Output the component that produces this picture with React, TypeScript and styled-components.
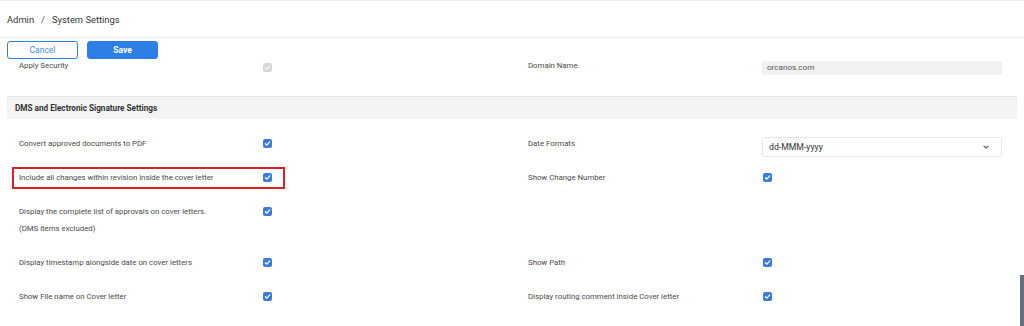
import styled, { createGlobalStyle } from "styled-components";

type Setting = {
  label: string;
  note?: string;
  checked?: boolean;
  highlight?: boolean;
};

type RowData = {
  left: Setting;
  right?: Setting & { select?: string };
};

const rows: RowData[] = [
  {
    left: { label: "Convert approved documents to PDF", checked: true },
    right: { label: "Date Formats", select: "dd-MMM-yyyy" },
  },
  {
    left: {
      label: "Include all changes within revision inside the cover letter",
      checked: true,
      highlight: true,
    },
    right: { label: "Show Change Number", checked: true },
  },
  {
    left: {
      label: "Display the complete list of approvals on cover letters.",
      note: "(DMS items excluded)",
      checked: true,
    },
  },
  {
    left: { label: "Display timestamp alongside date on cover letters", checked: true },
    right: { label: "Show Path", checked: true },
  },
  {
    left: { label: "Show File name on Cover letter", checked: true },
    right: { label: "Display routing comment inside Cover letter", checked: true },
  },
];

const Check = ({ disabled }: { disabled?: boolean }) => (
  <CheckBox $disabled={disabled}>
    <svg width="7" height="7" viewBox="0 0 10 10">
      <path
        d="M2 5.3 L4.2 7.4 L8.2 2.8"
        fill="none"
        stroke={disabled ? "#f4f4f4" : "#fff"}
        strokeWidth="1.8"
        strokeLinecap="round"
        strokeLinejoin="round"
      />
    </svg>
  </CheckBox>
);

export default function App() {
  return (
    <>
      <GlobalStyle />
      <Page>
        <Header>
          <Crumb>Admin</Crumb>
          <Slash>/</Slash>
          <Crumb>System Settings</Crumb>
        </Header>

        <Toolbar>
          <Button>Cancel</Button>
          <Button $primary>Save</Button>
        </Toolbar>

        <TopRow>
          <Label>Apply Security</Label>
          <Cell>
            <Check disabled />
          </Cell>
          <Label>Domain Name</Label>
          <Input>orcanos.com</Input>
        </TopRow>

        <Section>DMS and Electronic Signature Settings</Section>

        {rows.map((row, i) => (
          <Row key={i}>
            <LabelCell>
              {row.left.highlight && <Highlight />}
              <Label>{row.left.label}</Label>
              {row.left.note && <Label>{row.left.note}</Label>}
            </LabelCell>
            <Cell>{row.left.checked && <Check />}</Cell>
            <LabelCell>{row.right && <Label>{row.right.label}</Label>}</LabelCell>
            <Cell>
              {row.right?.select && (
                <Select>
                  <span>{row.right.select}</span>
                  <svg width="8" height="8" viewBox="0 0 10 10">
                    <path
                      d="M2.5 3.8 L5 6.2 L7.5 3.8"
                      fill="none"
                      stroke="#555"
                      strokeWidth="1.4"
                      strokeLinecap="round"
                    />
                  </svg>
                </Select>
              )}
              {row.right?.checked && <Check />}
            </Cell>
          </Row>
        ))}

        <Scrollbar />
      </Page>
    </>
  );
}

//style
const GlobalStyle = createGlobalStyle`
  html, body {
    margin: 0;
    padding: 0;
    background: #fff;
    overflow: hidden;
  }
  body {
    font-family: Roboto, "Liberation Sans", sans-serif;
  }
`;

const Page = styled.div`
  position: relative;
  width: 1024px;
  height: 326px;
  overflow: hidden;
  border-top: 1px solid #ececec;
  box-sizing: border-box;
`;

const Header = styled.div`
  display: flex;
  align-items: center;
  gap: 6px;
  height: 36px;
  padding-left: 7px;
  border-bottom: 1px solid #ececec;
  font-size: 9.4px;
  color: #333;
`;

const Crumb = styled.span``;

const Slash = styled.span`
  color: #555;
  padding: 0 1px;
`;

const Toolbar = styled.div`
  display: flex;
  gap: 9px;
  padding: 3px 0 0 7px;
`;

const Button = styled.button<{ $primary?: boolean }>`
  width: 71px;
  height: 18px;
  border-radius: 3px;
  font-family: inherit;
  font-size: 8.5px;
  font-weight: ${(p) => (p.$primary ? 700 : 400)};
  border: 1px solid #2d7fe6;
  background: ${(p) => (p.$primary ? "#2d7fe6" : "#fff")};
  color: ${(p) => (p.$primary ? "#fff" : "#4a8ae0")};
  padding: 0;
  box-sizing: border-box;
`;

const gridCols = `
  display: grid;
  grid-template-columns: 243px 266px 234px 240px;
  padding-left: 19px;
`;

const TopRow = styled.div`
  ${gridCols}
  align-items: center;
  height: 18px;
  margin-top: -1px;
  & > span {
    margin-top: -4px;
  }
`;

const Row = styled.div`
  ${gridCols}
  padding-top: 9px;
  padding-bottom: 8px;
`;

const LabelCell = styled.div`
  position: relative;
  display: flex;
  flex-direction: column;
`;

const Label = styled.span`
  font-size: 7.8px;
  line-height: 17px;
  color: #4a4a4a;
  white-space: nowrap;
`;

const Cell = styled.div`
  display: flex;
  align-items: flex-start;
  padding-top: 4px;
  height: 17px;
  box-sizing: border-box;
`;

const CheckBox = styled.span<{ $disabled?: boolean }>`
  display: inline-flex;
  align-items: center;
  justify-content: center;
  width: 9px;
  height: 9px;
  margin-left: 1px;
  border-radius: 2px;
  background: ${(p) => (p.$disabled ? "#d6d6d6" : "#3b7bd8")};
`;

const Input = styled.div`
  height: 14px;
  margin-top: 2px;
  border-radius: 3px;
  background: #f1f1f1;
  font-size: 8.1px;
  line-height: 13px;
  color: #555;
  padding-left: 5px;
  box-sizing: border-box;
`;

const Select = styled.div`
  display: flex;
  align-items: center;
  justify-content: space-between;
  width: 240px;
  height: 20px;
  margin-top: -2px;
  padding: 0 11px 0 6px;
  border: 1px solid #e6e6e6;
  border-radius: 3px;
  box-sizing: border-box;
  font-size: 8.7px;
  color: #333;
`;

const Section = styled.div`
  margin: 20px 7px 7px 7px;
  height: 23px;
  border-top: 1px solid #e4e4e4;
  background: #f4f4f4;
  box-sizing: border-box;
  padding-left: 8px;
  display: flex;
  align-items: center;
  font-size: 8.2px;
  font-weight: 700;
  color: #333;
`;

const Highlight = styled.div`
  position: absolute;
  left: -7px;
  top: -2px;
  width: 273px;
  height: 22px;
  border: 2px solid #d9232a;
  box-sizing: border-box;
  pointer-events: none;
`;

const Scrollbar = styled.div`
  position: absolute;
  right: 0;
  top: 274px;
  width: 4px;
  height: 52px;
  background: #66707d;
`;
